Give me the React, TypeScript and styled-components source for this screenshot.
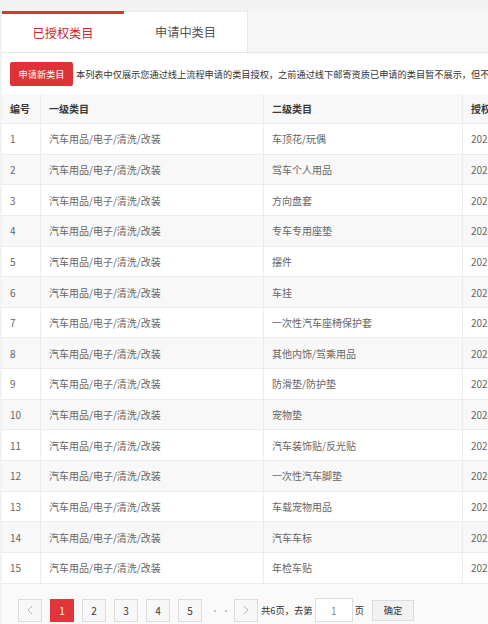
import React from 'react';
import styled, { createGlobalStyle } from 'styled-components';

const GlobalStyle = createGlobalStyle`
  html, body {
    margin: 0;
    padding: 0;
    background: #f2f2f2;
    font-family: "Noto Sans CJK SC", "Noto Sans", sans-serif;
  }
`;

const Page = styled.div`
  width: 488px;
  height: 624px;
  overflow: hidden;
  padding: 11px 0 0 2px;
  box-sizing: border-box;
  background: #f2f2f2;
`;

const Panel = styled.div`
  background: #fff;
  width: 620px;
  height: 613px;
`;

const TabBar = styled.div`
  display: flex;
  height: 42px;
  background: #f6f6f6;
  border-bottom: 1px solid #e6e6e6;
  box-sizing: border-box;
`;

const Tab = styled.div<{ $active?: boolean }>`
  display: flex;
  align-items: center;
  justify-content: center;
  width: ${({ $active }) => ($active ? '122px' : '124px')};
  background: #fff;
  box-sizing: border-box;
  font-size: 12.2px;
  color: ${({ $active }) => ($active ? '#c8272d' : '#555')};
  border-top: ${({ $active }) => ($active ? '3px solid #d9343a' : '1px solid #ececec')};
  border-right: ${({ $active }) => ($active ? 'none' : '1px solid #e8e8e8')};
  padding-bottom: ${({ $active }) => ($active ? '1px' : '0')};
`;

const Toolbar = styled.div`
  display: flex;
  align-items: center;
  gap: 3px;
  height: 41px;
  padding-left: 8px;
  white-space: nowrap;
`;

const RedButton = styled.div`
  display: flex;
  align-items: center;
  justify-content: center;
  width: 63px;
  height: 24px;
  background: #df3236;
  color: #fff;
  font-size: 9.2px;
  border-radius: 2px;
  flex: none;
`;

const Note = styled.span`
  font-size: 9.2px;
  color: #333;
`;

const Table = styled.div`
  display: flex;
  flex-direction: column;
`;

const Row = styled.div<{ $head?: boolean; $stripe?: boolean }>`
  display: grid;
  grid-template-columns: 38px 223px 199px 158px;
  height: ${({ $head }) => ($head ? '30px' : '30.65px')};
  background: ${({ $head, $stripe }) => ($head || $stripe ? '#f8f8f8' : '#fff')};
  border-bottom: 1px solid #ececec;
  box-sizing: border-box;
  font-size: 10px;
  color: ${({ $head }) => ($head ? '#383838' : '#666')};
  font-weight: ${({ $head }) => ($head ? 700 : 400)};
`;

const Cell = styled.div`
  display: flex;
  align-items: center;
  padding-left: 8px;
  border-left: 1px solid #ececec;
  white-space: nowrap;
  overflow: hidden;
  &:first-child {
    border-left: none;
  }
`;

const Pager = styled.div`
  display: flex;
  align-items: center;
  gap: 8px;
  padding: 13px 0 0 16px;
  height: 40px;
  box-sizing: border-box;
  background: #fafafa;
  font-size: 10px;
  color: #333;
`;

const PageBox = styled.div<{ $active?: boolean }>`
  display: flex;
  align-items: center;
  justify-content: center;
  width: 24px;
  height: 23px;
  box-sizing: border-box;
  border: 1px solid ${({ $active }) => ($active ? '#e0353a' : '#dcdcdc')};
  background: ${({ $active }) => ($active ? '#e0353a' : '#f7f7f7')};
  color: ${({ $active }) => ($active ? '#fff' : '#333')};
  font-size: 10px;
`;

const Dots = styled.span`
  width: 16px;
  text-align: center;
  color: #bbb;
  letter-spacing: 1px;
`;

const Jump = styled.div`
  display: flex;
  align-items: center;
  margin-left: -5px;
  white-space: nowrap;
  font-size: 9.3px;
`;

const PageInput = styled.div`
  display: flex;
  align-items: center;
  justify-content: center;
  width: 38px;
  height: 24px;
  margin: 0 2px;
  box-sizing: border-box;
  border: 1px solid #dcdcdc;
  background: #fff;
  color: #888;
  font-size: 10px;
`;

const Confirm = styled.div`
  display: flex;
  align-items: center;
  justify-content: center;
  width: 42px;
  height: 21px;
  margin-left: 8px;
  box-sizing: border-box;
  border: 1px solid #dcdcdc;
  background: #f2f2f2;
  color: #333;
`;

const Chevron = ({ dir }: { dir: 'left' | 'right' }) => (
  <svg width="8" height="10" viewBox="0 0 8 10">
    <polyline
      points={dir === 'left' ? '6,1 2,5 6,9' : '2,1 6,5 2,9'}
      fill="none"
      stroke="#b5b5b5"
      strokeWidth="1"
    />
  </svg>
);

const subs = [
  '车顶花/玩偶',
  '驾车个人用品',
  '方向盘套',
  '专车专用座垫',
  '摆件',
  '车挂',
  '一次性汽车座椅保护套',
  '其他内饰/驾乘用品',
  '防滑垫/防护垫',
  '宠物垫',
  '汽车装饰贴/反光贴',
  '一次性汽车脚垫',
  '车载宠物用品',
  '汽车车标',
  '年检车贴',
];

export default function App() {
  return (
    <Page>
      <GlobalStyle />
      <Panel>
        <TabBar>
          <Tab $active>已授权类目</Tab>
          <Tab>申请中类目</Tab>
        </TabBar>
        <Toolbar>
          <RedButton>申请新类目</RedButton>
          <Note>
            本列表中仅展示您通过线上流程申请的类目授权，之前通过线下邮寄资质已申请的类目暂不展示，但不影响您的正常经营。
          </Note>
        </Toolbar>
        <Table>
          <Row $head>
            <Cell>编号</Cell>
            <Cell>一级类目</Cell>
            <Cell>二级类目</Cell>
            <Cell>授权时间</Cell>
          </Row>
          {subs.map((s, i) => (
            <Row key={i} $stripe={i % 2 === 1}>
              <Cell>{i + 1}</Cell>
              <Cell>汽车用品/电子/清洗/改装</Cell>
              <Cell>{s}</Cell>
              <Cell>2021-03-15 10:20:33</Cell>
            </Row>
          ))}
        </Table>
        <Pager>
          <PageBox>
            <Chevron dir="left" />
          </PageBox>
          {[1, 2, 3, 4, 5].map((n) => (
            <PageBox key={n} $active={n === 1}>
              {n}
            </PageBox>
          ))}
          <Dots>···</Dots>
          <PageBox>
            <Chevron dir="right" />
          </PageBox>
          <Jump>
            共6页，去第
            <PageInput>1</PageInput>页
            <Confirm>确定</Confirm>
          </Jump>
        </Pager>
      </Panel>
    </Page>
  );
}
